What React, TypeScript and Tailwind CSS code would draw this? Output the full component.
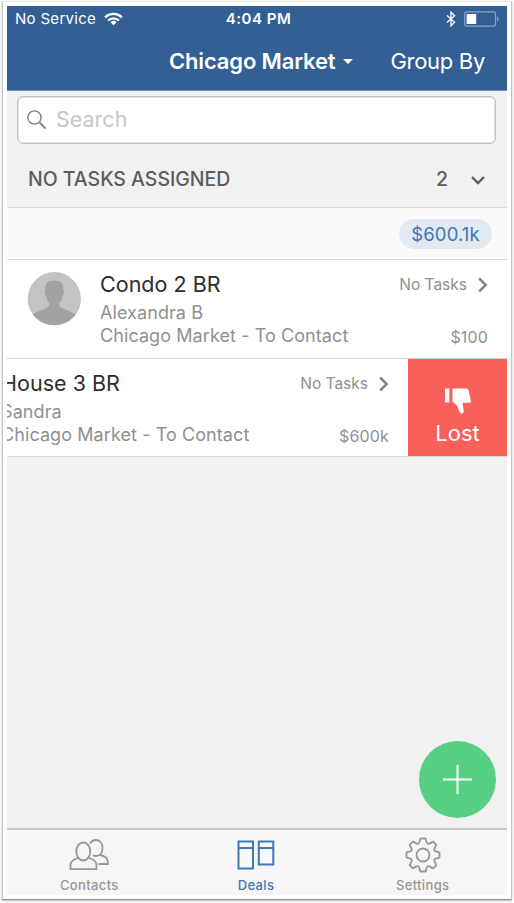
import type { ReactNode } from "react";

interface Deal {
  title: string;
  contact: string;
  stage: string;
  amount: string;
}

const deals: Deal[] = [
  {
    title: "Condo 2 BR",
    contact: "Alexandra B",
    stage: "Chicago Market - To Contact",
    amount: "$100",
  },
  {
    title: "House 3 BR",
    contact: "Sandra",
    stage: "Chicago Market - To Contact",
    amount: "$600k",
  },
];

function StatusBar() {
  return (
    <div className="flex h-[26px] items-center text-[15px] leading-[26px] text-white">
      <div className="flex flex-1 items-center pl-2">
        <span className="tracking-[0.3px]">No Service</span>
        <svg className="ml-2" width="19" height="14" viewBox="0 0 20 14" fill="none">
          <path d="M1.2 5.2a12.6 12.6 0 0 1 17.6 0" stroke="currentColor" strokeWidth="2.6" />
          <path d="M4.3 8.6a8.2 8.2 0 0 1 11.4 0" stroke="currentColor" strokeWidth="2.4" />
          <path d="M6.8 10.4a4.7 4.7 0 0 1 6.4 0L10 13.6Z" fill="currentColor" />
        </svg>
      </div>
      <span className="pl-[2px] font-semibold tracking-[0.5px]">4:04 PM</span>
      <div className="flex flex-1 items-center justify-end pr-[7px]">
        <svg width="10" height="16" viewBox="0 0 10 16" fill="none">
          <path d="M1 4.4 8.6 11.2 5 14.8V1.2l3.6 3.6L1 11.6" stroke="currentColor" strokeWidth="1.3" />
        </svg>
        <svg className="ml-2" width="36" height="16" viewBox="0 0 36 16" fill="none">
          <rect x="0.7" y="0.9" width="30.8" height="14.2" rx="2" stroke="#86a4c6" strokeWidth="1.2" />
          <rect x="2.6" y="3" width="9.6" height="10" rx="0.5" fill="white" />
          <path d="M33.4 5.6q1.8 2.4 0 4.8Z" fill="#86a4c6" stroke="#86a4c6" strokeWidth="0.6" />
        </svg>
      </div>
    </div>
  );
}

function Header() {
  return (
    <header className="h-[85px] shrink-0 border-b border-[#7190b7] bg-[#335f95] text-white">
      <StatusBar />
      <div className="flex h-[58px] items-center justify-end pr-[22px] text-[22px] leading-[58px]">
        <button className="flex items-center font-semibold tracking-[-0.15px]">
          Chicago Market
          <svg className="ml-2 h-[5px] w-[10px]" viewBox="0 0 10 5">
            <path d="M0 0h10L5 5Z" fill="currentColor" />
          </svg>
        </button>
        <button className="ml-[37px] tracking-[-0.3px]">Group By</button>
      </div>
    </header>
  );
}

function SearchBox() {
  return (
    <div className="mx-[10px] mt-[5px] flex h-12 w-[479px] shrink-0 items-center rounded-md border border-[#c3c3c3] bg-white pl-[9px] shadow-[inset_0_0_0_0.5px_#c3c3c3]">
      <svg width="20" height="20" viewBox="0 0 20 20" fill="none" stroke="#808080">
        <circle cx="7.5" cy="7.5" r="6.6" strokeWidth="1.4" />
        <path d="m12.4 12.4 6.2 6.2" strokeWidth="1.9" />
      </svg>
      <span className="ml-[9px] pb-[2px] text-[21.5px] leading-[44px] text-[#c7c7c7]">Search</span>
    </div>
  );
}

function Avatar() {
  return (
    <svg className="h-[54px] w-[54px]" viewBox="0 0 54 54">
      <defs>
        <clipPath id="avatar">
          <circle cx="27.3" cy="26.7" r="26.6" />
        </clipPath>
      </defs>
      <g clipPath="url(#avatar)">
        <rect width="54" height="54" fill="#c3c3c3" />
        <path
          d="M27.3 8.500c6.500 0 9.500 3.200 9 9.300c1 1.200.5 5.200-1 6.200c-.5 4-1.500 5.500-3.300 7.500c0 3 2 4.500 6 6c5 1.800 8 3 10.500 5V54H6V42.500c2.500-2 5.500-3.200 10.500-5c4-1.500 6-3 6-6c-1.700-2-2.700-3.500-3.200-7.500c-1.500-1-2-5-1-6.200c-.5-6.100 2.500-9.300 9-9.300Z"
          fill="#a2a2a2"
        />
      </g>
    </svg>
  );
}

function DealRow({ deal }: { deal: Deal }) {
  return (
    <div className="flex h-full w-[500px] shrink-0 bg-white pl-5">
      <div className="mt-3 w-[73px] shrink-0">
        <Avatar />
      </div>
      <div className="flex-1 whitespace-nowrap text-[18px] tracking-[0.08px] text-[#909090]">
        <h3 className="mt-[10px] text-[21.5px] leading-7 tracking-[0.02px] text-[#2d2d2d]">{deal.title}</h3>
        <p className="mt-[3px] leading-[23px]">{deal.contact}</p>
        <p className="leading-[23px]">{deal.stage}</p>
      </div>
      <div className="flex shrink-0 flex-col items-end pr-[19px] text-[15.5px] text-[#909090]">
        <div className="mt-[13px] flex items-center leading-6">
          No Tasks
          <svg className="ml-[11px]" width="10" height="16" viewBox="0 0 10 16" fill="none">
            <path d="m1.2 1.5 6.500 6.500-6.500 6.500" stroke="#858585" strokeWidth="2.5" />
          </svg>
        </div>
        <span className="mt-7 text-[16px] leading-6 tracking-[0.15px]">{deal.amount}</span>
      </div>
    </div>
  );
}

function LostAction() {
  return (
    <button className="flex w-[99px] shrink-0 flex-col items-center bg-[#f96059] text-white">
      <svg className="mt-[29px]" width="26" height="26" viewBox="0 0 26 26" fill="currentColor">
        <path d="M0 0.500h4.300v14H0Z" />
        <path d="M7.500 0.500h13.500c1.500 0 2.300.7 2.600 2l2.200 10c.3 1.500-.4 2.300-1.900 2.300H17.500l1.100 7.400c.2 2-.4 3.300-1.800 3.300c-1.200 0-1.900-.7-2.400-1.900L11.600 17L7.500 13.800Z" />
      </svg>
      <span className="mt-[3px] text-[22px] leading-8">Lost</span>
    </button>
  );
}

function ContactsIcon() {
  return (
    <svg width="40" height="32" viewBox="0 0 40 32" fill="none" stroke="currentColor" strokeWidth="1.8">
      <ellipse cx="14.3" cy="12.5" rx="7" ry="9" />
      <path d="M9 19c-5 1.500-7.500 3-7.500 7v4.200h26V26c0-4-2.500-5.500-7.500-7" />
      <path d="M21.200 4.500C22.300 2.200 24.300 1 27 1c4 0 6.500 3.300 6.500 8s-2.500 8-6.500 8c-1.200 0-2.200-.3-3-.8M31 16c5 1.200 7.800 3 7.800 6.500V25h-9.300" />
    </svg>
  );
}

function DealsIcon() {
  return (
    <svg width="38" height="30" viewBox="0 0 38 30" fill="none" stroke="currentColor" strokeWidth="2">
      <path d="M1.5 1.500H16v27H1.500ZM1.500 8H16M21.800 1.500h14.500v23H21.800ZM21.800 8h14.500" />
    </svg>
  );
}

function SettingsIcon() {
  return (
    <svg width="36" height="36" viewBox="0 0 36 36" fill="none" stroke="currentColor" strokeWidth="1.8" strokeLinejoin="round">
      <path d="M15.500 1.500h5c.8 1.500.6 4.500 2.200 5.200s3.800-1.500 5.400-2l3.200 3.200c-.5 1.600-2.700 3.800-2 5.400s3.700 1.400 5.200 2.200v5c-1.500.8-4.500.6-5.200 2.200s1.500 3.800 2 5.400l-3.200 3.200c-1.600-.5-3.800-2.700-5.400-2s-1.400 3.700-2.200 5.200h-5c-.8-1.500-.6-4.500-2.200-5.200s-3.800 1.500-5.400 2l-3.200-3.200c.5-1.600 2.700-3.800 2-5.400s-3.700-1.400-5.200-2.200v-5c1.500-.8 4.500-.6 5.200-2.200s-1.500-3.800-2-5.400l3.200-3.200c1.600.5 3.800 2.700 5.400 2s1.400-3.700 2.200-5.200Z" />
      <circle cx="18" cy="18" r="6.5" />
    </svg>
  );
}

function Tab({ label, icon, className }: { label: string; icon: ReactNode; className: string }) {
  return (
    <button className={`flex flex-1 flex-col items-center ${className}`}>
      <span className="mt-[6px] flex h-[38px] items-center">{icon}</span>
      <span className="mt-[2px] text-[13px] font-medium leading-[18px] tracking-[0.35px]">{label}</span>
    </button>
  );
}

export default function App() {
  return (
    <div className="h-[903px] w-[514px] bg-white px-[2px] pt-px font-[Inter,sans-serif]">
      <div className="h-[899px] border border-[#c4c4c4] border-b-[#8f8f8f] border-t-[#e6e6e6] px-1 pt-1 shadow-[0_1px_2px_#bbb]">
        <div className="flex h-[889px] w-[500px] flex-col overflow-hidden bg-[#f1f1f1]">
          <Header />
          <SearchBox />
          <div className="mt-[2px] flex h-[62px] shrink-0 items-center border-b border-[#d9d9d9] pl-[21px] pr-[22px] pt-[7px] text-[19.5px] font-medium text-[#5c5c5c]">
            <span className="flex-1 tracking-[-0.02px]">NO TASKS ASSIGNED</span>
            <span className="mr-[23px]">2</span>
            <svg width="14" height="9" viewBox="0 0 14 9" fill="none">
              <path d="m1 1 6 6 6-6" stroke="currentColor" strokeWidth="2.4" />
            </svg>
          </div>
          <div className="flex h-[52px] shrink-0 items-center justify-end border-b border-[#dcdcdc] bg-[#fafafa] pr-[15px]">
            <span className="flex h-[30px] w-[93px] items-center justify-center rounded-full bg-[#e1e9f2] pt-[2px] text-[18.5px] tracking-[0.1px] text-[#4276b5]">
              $600.1k
            </span>
          </div>
          <div className="h-[99px] shrink-0 border-b border-[#d3d3d3]">
            <DealRow deal={deals[0]} />
          </div>
          {/* second row is swiped open to reveal its action */}
          <div className="flex h-[98px] shrink-0 justify-end overflow-hidden border-b border-[#d9d9d9]">
            <DealRow deal={deals[1]} />
            <LostAction />
          </div>
          <div className="flex flex-1 items-end justify-end pb-[10px] pr-[11px]">
            <button className="flex h-[77px] w-[77px] items-center justify-center rounded-full bg-[#58d083]">
              <svg width="29" height="29" viewBox="0 0 29 29" stroke="white" strokeWidth="2">
                <path d="M14.5 0v29M0 14.5h29" />
              </svg>
            </button>
          </div>
          <nav className="-ml-px flex h-[67px] shrink-0 border-t-2 border-[#c9c9c9] bg-[#f6f6f6] pr-px">
            <Tab label="Contacts" icon={<ContactsIcon />} className="text-[#979797]" />
            <Tab label="Deals" icon={<DealsIcon />} className="text-[#4276b5]" />
            <Tab label="Settings" icon={<SettingsIcon />} className="text-[#979797]" />
          </nav>
        </div>
      </div>
    </div>
  );
}
